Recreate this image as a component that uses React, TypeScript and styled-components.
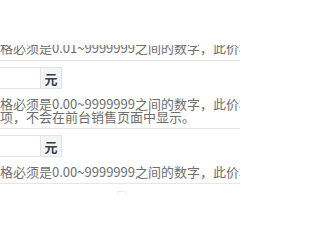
import React from 'react'
import styled, { createGlobalStyle } from 'styled-components'

const GlobalStyle = createGlobalStyle`
  html, body {
    margin: 0;
    padding: 0;
    background: #fff;
  }
  body {
    font-family: "Noto Sans CJK SC", "Noto Sans", sans-serif;
    font-size: 13px;
    color: #666;
  }
`

const Page = styled.div`
  width: 240px;
  height: 240px;
  overflow: hidden;
  background: #fff;
`

const HeaderSpace = styled.div`
  height: 45px;
`

const Viewport = styled.div`
  height: 195px;
  overflow: hidden;
`

const Form = styled.div`
  margin-top: -4px;
  margin-left: -13px;
  width: 420px;
`

const Row = styled.div<{ $top?: number; $bottom?: number }>`
  padding: ${p => p.$top ?? 6}px 0 ${p => p.$bottom ?? 5}px;
  border-bottom: 1px solid #e6e6e6;
`

const InputGroup = styled.div`
  display: flex;
  height: 22px;
  margin-left: -40px;
`

const Input = styled.div`
  width: 92px;
  height: 20px;
  border: 1px solid #e3e3e3;
  border-right: none;
  background: #fff;
`

const Addon = styled.div`
  width: 20px;
  height: 20px;
  border: 1px solid #e3e3e3;
  background: #f4f5f7;
  display: flex;
  align-items: center;
  justify-content: center;
  font-weight: bold;
  font-size: 13px;
  color: #3a3f4b;
`

const Help = styled.div<{ $gap?: number }>`
  margin-top: ${p => p.$gap ?? 8}px;
  line-height: 13px;
  white-space: nowrap;
  color: #6e6e6e;
`

const Stub = styled.div`
  margin: 7px 0 0 130px;
  width: 7px;
  height: 2px;
  border: 1px solid #ececec;
  border-bottom: none;
`

const PriceField = ({ range, children }: { range: string; children?: React.ReactNode }) => (
  <Row>
    <InputGroup>
      <Input />
      <Addon>元</Addon>
    </InputGroup>
    <Help>
      价格必须是{range}之间的数字，此价格为空时将不显示此
      {children}
    </Help>
  </Row>
)

export default function App() {
  return (
    <Page>
      <GlobalStyle />
      <HeaderSpace />
      <Viewport>
        <Form>
          <Row $top={0} $bottom={6}>
            <Help $gap={0}>价格必须是0.01~9999999之间的数字，此价格为必填项</Help>
          </Row>
          <PriceField range="0.00~9999999">
            <br />
            此项，不会在前台销售页面中显示。
          </PriceField>
          <PriceField range="0.00~9999999" />
          <Stub />
        </Form>
      </Viewport>
    </Page>
  )
}
